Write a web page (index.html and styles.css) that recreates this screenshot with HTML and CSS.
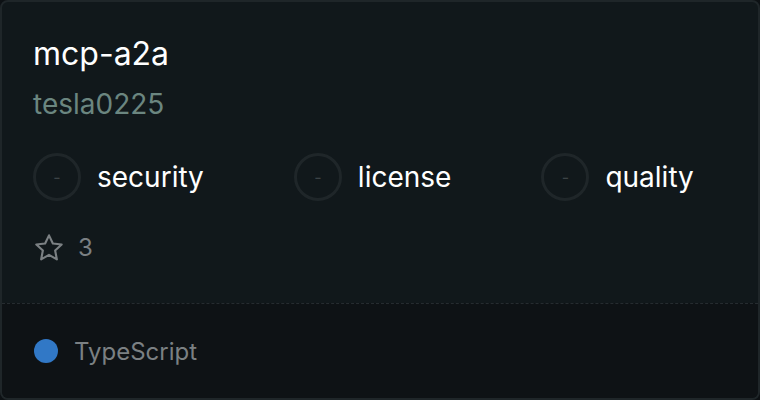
FILE: index.html
```html
<!DOCTYPE html>
<html lang="en">
<head>
  <meta charset="UTF-8">
  <title>mcp-a2a</title>
  <link rel="stylesheet" href="styles.css">
</head>
<body>
  <div class="card">
    <div class="card-main">
      <h1 class="repo-name">mcp-a2a</h1>
      <div class="repo-owner">tesla0225</div>

      <div class="scores">
        <div class="score">
          <span class="score-ring">-</span>
          <span class="score-label">security</span>
        </div>
        <div class="score">
          <span class="score-ring">-</span>
          <span class="score-label">license</span>
        </div>
        <div class="score">
          <span class="score-ring">-</span>
          <span class="score-label">quality</span>
        </div>
      </div>

      <div class="stars">
        <svg class="star-icon" width="32" height="32" viewBox="0 0 24 24" fill="none" stroke="currentColor" stroke-width="1.6" stroke-linejoin="round">
          <polygon points="12 2.5 14.9 8.6 21.5 9.4 16.6 13.9 17.9 20.5 12 17.2 6.1 20.5 7.4 13.9 2.5 9.4 9.1 8.6"/>
        </svg>
        <span>3</span>
      </div>
    </div>

    <div class="card-footer">
      <span class="lang-dot"></span>
      <span class="lang-name">TypeScript</span>
    </div>
  </div>
</body>
</html>
```

FILE: styles.css
```css
html, body {
  margin: 0;
  height: 100%;
}

body {
  font-family: Inter, "Noto Sans", sans-serif;
  background: #0d1114;
}

.card {
  box-sizing: border-box;
  height: 400px;
  display: flex;
  flex-direction: column;
  background: #11181b;
  border: 2px solid #1f2629;
  border-radius: 8px;
  overflow: hidden;
}

.card-main {
  flex: 1;
  padding: 32px 31px 0;
}

.repo-name {
  margin: 0;
  font-size: 32px;
  font-weight: 400;
  color: #ffffff;
  line-height: 40px;
}

.repo-owner {
  margin-top: 12px;
  font-size: 28px;
  color: #6b8680;
  line-height: 36px;
}

.scores {
  display: flex;
  gap: 90px;
  margin-top: 31px;
}

.score {
  display: flex;
  align-items: center;
  gap: 16px;
}

.score-ring {
  box-sizing: border-box;
  width: 48px;
  height: 48px;
  border: 3px solid #1f2629;
  border-radius: 50%;
  display: flex;
  align-items: center;
  justify-content: center;
  color: #3c4346;
  font-size: 16px;
}

.score-label {
  font-size: 28px;
  color: #ffffff;
  line-height: 36px;
}

.stars {
  display: flex;
  align-items: center;
  gap: 13px;
  margin-top: 31px;
  color: #7b8083;
  font-size: 24px;
  line-height: 32px;
}

.star-icon {
  display: block;
}

.card-footer {
  height: 94px;
  display: flex;
  align-items: center;
  gap: 16px;
  padding: 0 32px;
  background: #0e1215;
  border-top: 1px dashed #262c30;
}

.lang-dot {
  width: 24px;
  height: 24px;
  border-radius: 50%;
  background: #3178c6;
}

.lang-name {
  font-size: 24px;
  color: #7b8083;
}
```
